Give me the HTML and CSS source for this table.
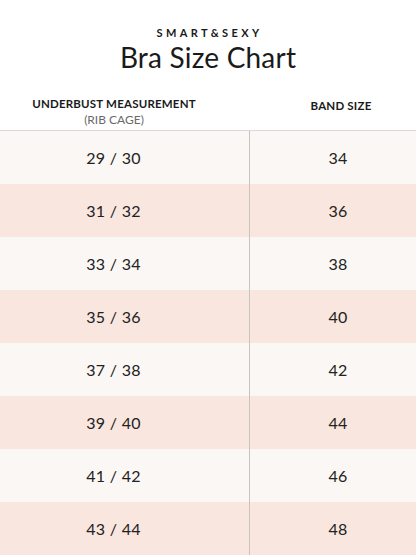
FILE: index.html
```html
<!DOCTYPE html>
<html>
<head>
<meta charset="utf-8">
<link rel="stylesheet" href="styles.css">
</head>
<body>
<div class="page">
  <header class="title-block">
    <div class="brand">SMART&amp;SEXY</div>
    <h1 class="title">Bra Size Chart</h1>
  </header>
  <div class="chart">
    <div class="head head-left">
      <div class="head-main">UNDERBUST MEASUREMENT</div>
      <div class="head-sub">(RIB CAGE)</div>
    </div>
    <div class="head head-right">
      <div class="head-main">BAND SIZE</div>
    </div>

    <div class="cell left light">29 / 30</div><div class="cell right light">34</div>
    <div class="cell left pink">31 / 32</div><div class="cell right pink">36</div>
    <div class="cell left light">33 / 34</div><div class="cell right light">38</div>
    <div class="cell left pink">35 / 36</div><div class="cell right pink">40</div>
    <div class="cell left light">37 / 38</div><div class="cell right light">42</div>
    <div class="cell left pink">39 / 40</div><div class="cell right pink">44</div>
    <div class="cell left light">41 / 42</div><div class="cell right light">46</div>
    <div class="cell left pink">43 / 44</div><div class="cell right pink">48</div>
  </div>
</div>
</body>
</html>
```

FILE: styles.css
```css
html, body {
  margin: 0;
  padding: 0;
  background: #ffffff;
}
body {
  font-family: Lato, "Open Sans", sans-serif;
  color: #1e1e1e;
  width: 416px;
  height: 555px;
  overflow: hidden;
}
.title-block {
  text-align: center;
  padding-top: 25px;
}
.brand {
  font-size: 11px;
  line-height: 16px;
  font-weight: 700;
  letter-spacing: 3.4px;
  padding-left: 3px;
  color: #1a1a1a;
}
.title {
  margin: 0;
  font-size: 28px;
  line-height: 32px;
  font-weight: 400;
  color: #1a1a1a;
  letter-spacing: 0.2px;
}
.chart {
  display: grid;
  grid-template-columns: 250px 1fr;
  grid-template-rows: 58px repeat(8, 53px);
}
.head {
  display: flex;
  flex-direction: column;
  justify-content: flex-end;
  align-items: center;
  border-bottom: 1px solid #dcd8d6;
  padding-bottom: 3px;
  box-sizing: border-box;
}
.head-left {
  padding-right: 22px;
}
.head-right {
  padding-left: 16px;
  justify-content: center;
  padding-top: 8px;
  padding-bottom: 0;
}
.head-main {
  font-size: 11.5px;
  line-height: 15px;
  font-weight: 700;
  color: #1a1a1a;
  letter-spacing: 0.2px;
}
.head-sub {
  font-size: 12px;
  line-height: 15px;
  color: #6a6a6a;
  margin-top: 1px;
}
.cell {
  display: flex;
  align-items: center;
  justify-content: center;
  font-size: 16px;
  color: #222222;
  letter-spacing: 0.3px;
}
.cell.left {
  padding-right: 22px;
  border-right: 1px solid #c9c3c0;
}
.cell.right {
  padding-left: 10px;
}
.light {
  background: #fbf7f4;
}
.pink {
  background: #f8e6df;
}
```
